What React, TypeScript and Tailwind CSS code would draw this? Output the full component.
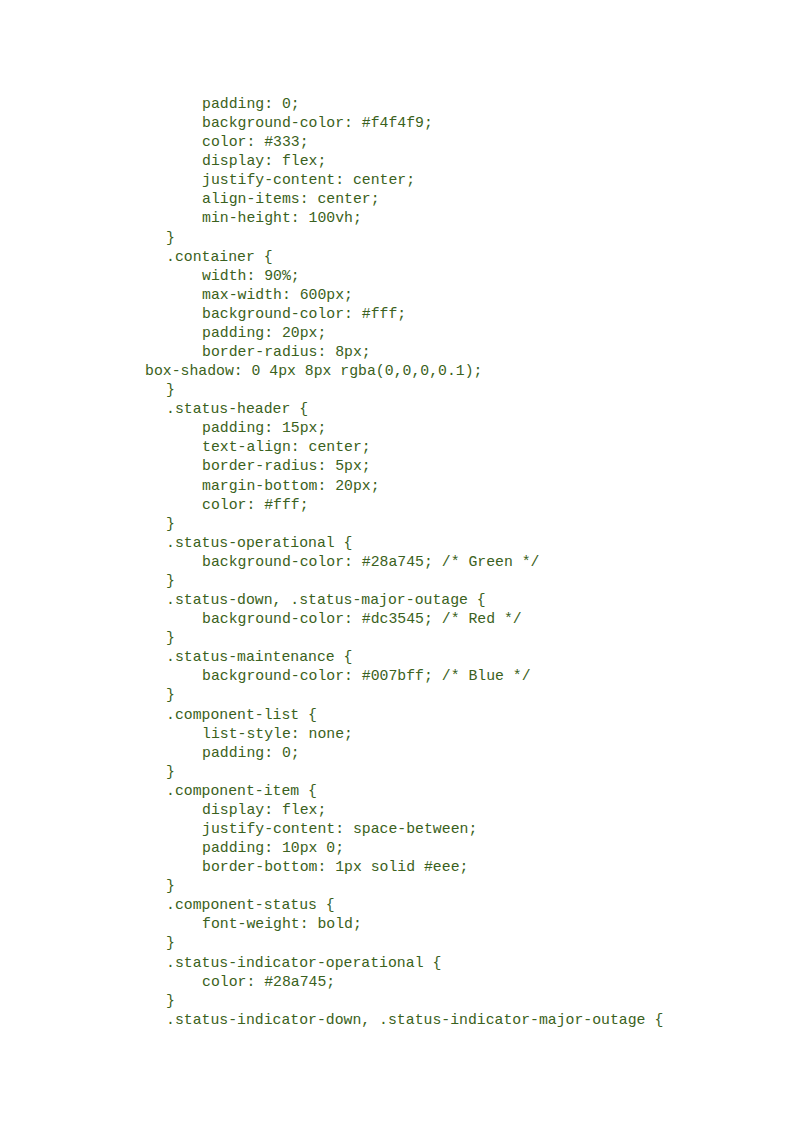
const LINES: [number, string][] = [
  [2, "padding: 0;"],
  [2, "background-color: #f4f4f9;"],
  [2, "color: #333;"],
  [2, "display: flex;"],
  [2, "justify-content: center;"],
  [2, "align-items: center;"],
  [2, "min-height: 100vh;"],
  [1, "}"],
  [1, ".container {"],
  [2, "width: 90%;"],
  [2, "max-width: 600px;"],
  [2, "background-color: #fff;"],
  [2, "padding: 20px;"],
  [2, "border-radius: 8px;"],
  [0, "box-shadow: 0 4px 8px rgba(0,0,0,0.1);"],
  [1, "}"],
  [1, ".status-header {"],
  [2, "padding: 15px;"],
  [2, "text-align: center;"],
  [2, "border-radius: 5px;"],
  [2, "margin-bottom: 20px;"],
  [2, "color: #fff;"],
  [1, "}"],
  [1, ".status-operational {"],
  [2, "background-color: #28a745; /* Green */"],
  [1, "}"],
  [1, ".status-down, .status-major-outage {"],
  [2, "background-color: #dc3545; /* Red */"],
  [1, "}"],
  [1, ".status-maintenance {"],
  [2, "background-color: #007bff; /* Blue */"],
  [1, "}"],
  [1, ".component-list {"],
  [2, "list-style: none;"],
  [2, "padding: 0;"],
  [1, "}"],
  [1, ".component-item {"],
  [2, "display: flex;"],
  [2, "justify-content: space-between;"],
  [2, "padding: 10px 0;"],
  [2, "border-bottom: 1px solid #eee;"],
  [1, "}"],
  [1, ".component-status {"],
  [2, "font-weight: bold;"],
  [1, "}"],
  [1, ".status-indicator-operational {"],
  [2, "color: #28a745;"],
  [1, "}"],
  [1, ".status-indicator-down, .status-indicator-major-outage {"],
];

const INDENT = ["pl-[145px]", "pl-[166px]", "pl-[202px]"];

export default function App() {
  return (
    <div className="min-h-[1130px] w-[800px] bg-white pt-[95px] font-['Liberation_Mono',monospace] text-[14.8px] leading-[19.08px] text-[#3a6120]">
      {LINES.map(([lvl, text], i) => (
        <div key={i} className={`whitespace-pre ${INDENT[lvl]}`}>
          {text}
        </div>
      ))}
    </div>
  );
}
